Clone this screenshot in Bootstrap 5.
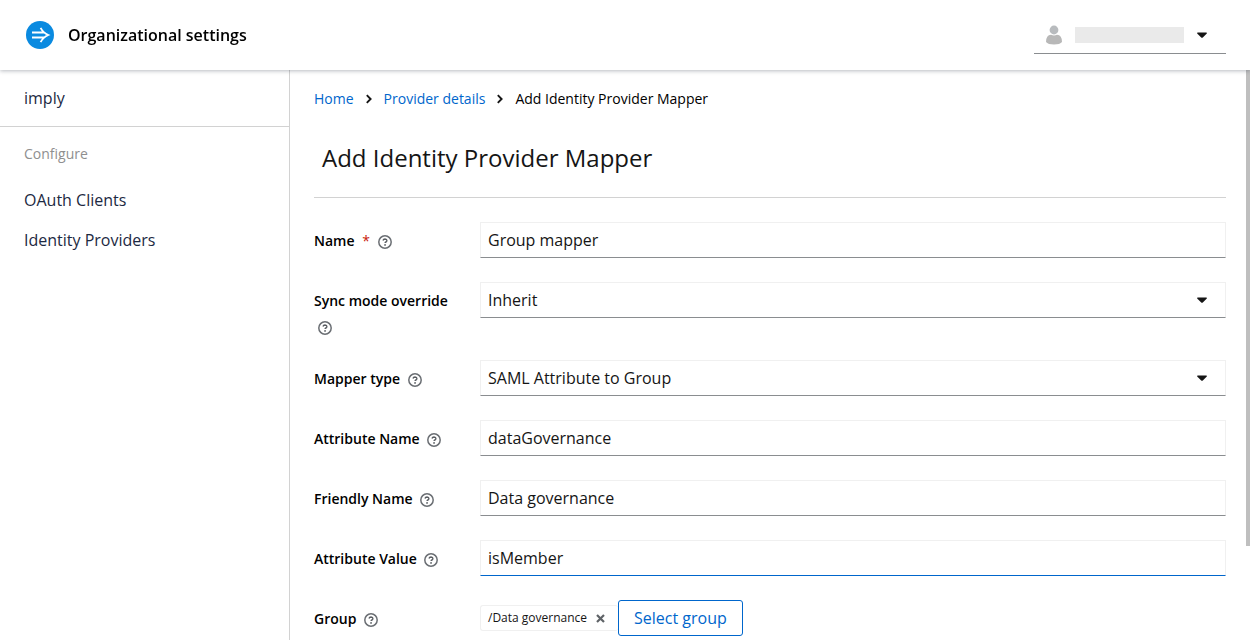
<!DOCTYPE html>
<html lang="en">
<head>
<meta charset="utf-8">
<meta name="viewport" content="width=device-width, initial-scale=1">
<title>Add Identity Provider Mapper</title>
<link rel="stylesheet" href="https://cdn.jsdelivr.net/npm/bootstrap@5.3.0/dist/css/bootstrap.min.css">
<style>
  :root { --ink: #151515; --navy: #1c2942; --link: #0066cc; --rule: #d2d2d2; --edge: #f0f0f0; --under: #8a8d90; }
  body { font-family: "Open Sans", "Noto Sans", sans-serif; font-size: 16px; line-height: 24px; color: var(--ink); background: #fff; }
  a { color: var(--link); text-decoration: none; }

  .masthead { height: 70px; padding: 0 24px 0 26px; box-shadow: 0 1px 4px rgba(20, 30, 50, .3); z-index: 2; background: #fff; }
  .brand { gap: 14px; }
  .brand-name { font-weight: 600; color: #000; }
  .account { width: 192px; height: 38px; padding: 0 19px 0 12px; border: 0; border-bottom: 1px solid var(--under); background: #fff; gap: 13px; }
  .account-name { height: 16px; background: #eaeaea; }

  .page-body { min-height: calc(100vh - 70px); }
  .side { width: 290px; border-right: 1px solid var(--rule); }
  .side a { color: var(--navy); }
  .realm { padding: 16px 24px; border-bottom: 1px solid var(--rule); color: var(--navy); }
  .side-menu { padding: 15px 24px; }
  .side-title { font-size: 14px; color: #8f8f8f; }
  .side-list { padding-top: 22px; gap: 16px; }

  .content-pane { padding: 17px 24px 4px; min-width: 0; }
  .trail { font-size: 14px; color: #000; gap: 11px; }
  .title-bar { padding: 29px 8px 21px; border-bottom: 1px solid var(--rule); margin-bottom: 24px; }
  .title-bar h1 { font-size: 24px; line-height: 36px; font-weight: 400; }

  .mapper-form { display: grid; row-gap: 20px; }
  .field-row { display: grid; grid-template-columns: 150px minmax(0, 1fr); column-gap: 16px; min-height: 40px; align-items: start; }
  .field-label { padding-top: 6px; font-size: 14px; line-height: 26px; color: #000; }
  .field-label label { font-weight: 600; }
  .required { color: #c9190b; margin-left: 4px; }
  .help { border: 0; background: none; padding: 0; margin: 0 4px; line-height: 14px; vertical-align: -3px; }
  .help svg, .chip svg, .masthead svg, .trail svg { display: block; }

  .mapper-form .form-control, .mapper-form .form-select {
    height: 36px; padding: 5px 7px; font-size: 16px; line-height: 24px; color: var(--ink);
    border: 1px solid var(--edge); border-bottom-color: var(--under); border-radius: 0; box-shadow: none;
  }
  .mapper-form .form-select {
    padding-right: 40px; background-position: right 18px center; background-size: 10px 6px;
    background-image: url("data:image/svg+xml,%3Csvg xmlns='http://www.w3.org/2000/svg' viewBox='0 0 10 6'%3E%3Cpath fill='%23151515' d='M.7 0.5h8.6q1 .4.3 1.2L5.8 5.5q-.8.7-1.6 0L.4 1.700Q-.3.9.7.5z'/%3E%3C/svg%3E");
  }
  .mapper-form .form-control.current { border-bottom-color: var(--link); }
  .chip { height: 26px; width: 138px; padding: 0 7px; font-size: 12px; border: 1px solid var(--edge); border-right: 0; border-radius: 3px; }
  .chip button { border: 0; background: none; padding: 0; margin-left: 9px; }
  .pick { --bs-btn-color: #0066cc; --bs-btn-border-color: #0066cc; --bs-btn-padding-x: 15px; --bs-btn-padding-y: 5px; --bs-btn-line-height: 24px; --bs-btn-border-radius: 3px; }
  .scroll-thumb { top: 70px; right: 0; width: 4px; height: calc(100vh - 164px); background: #bfbfbf; }
</style>
</head>
<body>
<svg class="d-none" aria-hidden="true">
  <symbol id="i-help" viewBox="0 0 14 14">
    <circle cx="7" cy="7" r="6.2" fill="none" stroke="#6a6e73" stroke-width="1.5"/>
    <path d="M5 5.500Q5.400 4 7 4q1.900.1 1.900 1.600 0 .9-1 1.400-.8.4-.8 1.100" fill="none" stroke="#5a5e63" stroke-width="1.400"/>
    <circle cx="7.050" cy="9.900" r=".9" fill="#5a5e63"/>
  </symbol>
  <symbol id="i-next" viewBox="0 0 8 10">
    <path d="M1.800 1.200 5.600 5 1.800 8.800" fill="none" stroke="#151515" stroke-width="1.900"/>
  </symbol>
</svg>

<header class="masthead position-relative d-flex align-items-center justify-content-between">
  <div class="brand d-flex align-items-center">
    <svg width="28" height="28" viewBox="0 0 28 28" aria-hidden="true">
      <circle cx="14" cy="14" r="14" fill="#0a8ae0"/>
      <path d="M6 11.500h12.500M6 16.500h12.500M14.600 6.800q2.600 5 7.700 7.200-5.100 2.200-7.700 7.200" fill="none" stroke="#fff" stroke-width="1.800"/>
    </svg>
    <span class="brand-name">Organizational settings</span>
  </div>
  <button type="button" class="account d-flex align-items-center" aria-label="Account menu">
    <svg width="16" height="20" viewBox="0 0 16 20" aria-hidden="true">
      <circle cx="8" cy="5" r="4.400" fill="#b8bbbe"/>
      <path d="M0 17q0-7 5-7.300 3 1.400 6 0 5 .3 5 7.300-2 2.500-8 2.500T0 17z" fill="#b8b8b8"/>
    </svg>
    <span class="account-name flex-grow-1"></span>
    <svg width="10" height="6" viewBox="0 0 10 6" aria-hidden="true"><path fill="#151515" d="M.7.500h8.600q1 .4.3 1.200L5.800 5.500q-.8.7-1.600 0L.4 1.700Q-.3.9.7.500z"/></svg>
  </button>
</header>

<div class="page-body d-flex">
  <nav class="side flex-shrink-0" aria-label="Organization">
    <div class="realm">imply</div>
    <div class="side-menu">
      <div class="side-title">Configure</div>
      <ul class="side-list list-unstyled d-flex flex-column mb-0">
        <li><a href="#clients">OAuth Clients</a></li>
        <li><a href="#providers">Identity Providers</a></li>
      </ul>
    </div>
  </nav>

  <main class="content-pane flex-grow-1">
    <nav class="trail d-flex align-items-center" aria-label="Breadcrumb">
      <a href="#home">Home</a>
      <svg width="8" height="10" aria-hidden="true"><use href="#i-next"/></svg>
      <a href="#details">Provider details</a>
      <svg width="8" height="10" aria-hidden="true"><use href="#i-next"/></svg>
      <span aria-current="page">Add Identity Provider Mapper</span>
    </nav>
    <div class="title-bar"><h1 class="mb-0">Add Identity Provider Mapper</h1></div>

    <form class="mapper-form">
      <div class="field-row">
        <div class="field-label"><label for="name">Name</label> <span class="required">*</span> <button type="button" class="help" aria-label="Help for name"><svg width="14" height="14"><use href="#i-help"/></svg></button></div>
        <input id="name" type="text" class="form-control" value="Group mapper">
      </div>
      <div class="field-row">
        <div class="field-label"><label for="sync">Sync mode override</label> <button type="button" class="help" aria-label="Help for sync mode override"><svg width="14" height="14"><use href="#i-help"/></svg></button></div>
        <select id="sync" class="form-select"><option>Inherit</option></select>
      </div>
      <div class="field-row">
        <div class="field-label"><label for="type">Mapper type</label> <button type="button" class="help" aria-label="Help for mapper type"><svg width="14" height="14"><use href="#i-help"/></svg></button></div>
        <select id="type" class="form-select"><option>SAML Attribute to Group</option></select>
      </div>
      <div class="field-row">
        <div class="field-label"><label for="attr">Attribute Name</label> <button type="button" class="help" aria-label="Help for attribute name"><svg width="14" height="14"><use href="#i-help"/></svg></button></div>
        <input id="attr" type="text" class="form-control" value="dataGovernance">
      </div>
      <div class="field-row">
        <div class="field-label"><label for="friendly">Friendly Name</label> <button type="button" class="help" aria-label="Help for friendly name"><svg width="14" height="14"><use href="#i-help"/></svg></button></div>
        <input id="friendly" type="text" class="form-control" value="Data governance">
      </div>
      <div class="field-row">
        <div class="field-label"><label for="value">Attribute Value</label> <button type="button" class="help" aria-label="Help for attribute value"><svg width="14" height="14"><use href="#i-help"/></svg></button></div>
        <input id="value" type="text" class="form-control current" value="isMember">
      </div>
      <div class="field-row">
        <div class="field-label"><label for="group">Group</label> <button type="button" class="help" aria-label="Help for group"><svg width="14" height="14"><use href="#i-help"/></svg></button></div>
        <div class="d-flex align-items-center">
          <span class="chip d-flex align-items-center text-nowrap">/Data governance
            <button type="button" aria-label="Remove group"><svg width="9" height="9" viewBox="0 0 9 9"><path d="M1 1l7 7M8 1 1 8" stroke="#5f6367" stroke-width="2.200"/></svg></button>
          </span>
          <button id="group" type="button" class="btn btn-outline-primary pick">Select group</button>
        </div>
      </div>
    </form>
  </main>
</div>
<div class="scroll-thumb position-fixed" aria-hidden="true"></div>
<script src="https://cdn.jsdelivr.net/npm/bootstrap@5.3.0/dist/js/bootstrap.bundle.min.js"></script>
</body>
</html>
